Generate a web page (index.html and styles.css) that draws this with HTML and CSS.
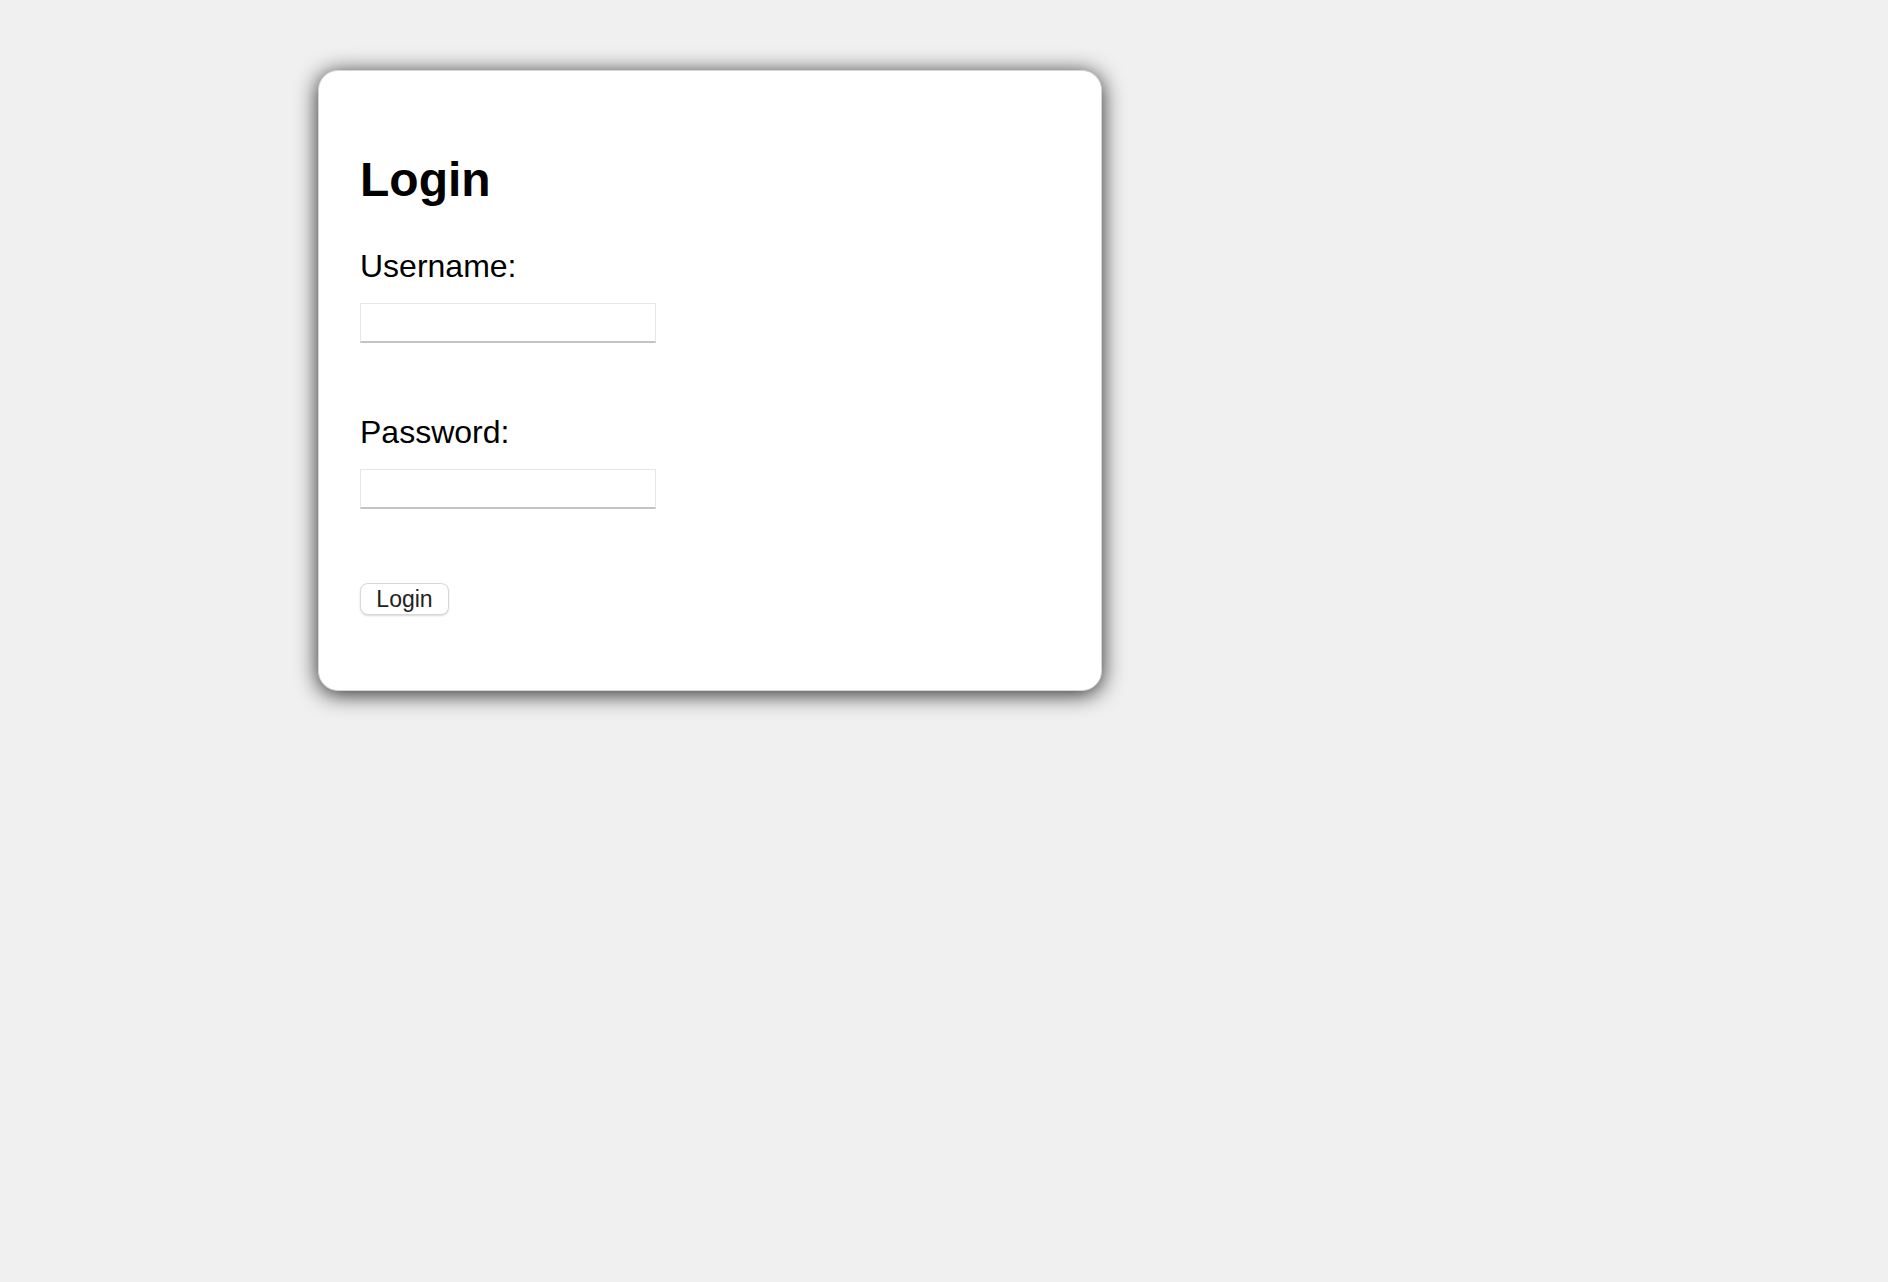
FILE: index.html
```html
<!DOCTYPE html>
<html lang="en">
<head>
<meta charset="utf-8">
<title>Login</title>
<link rel="stylesheet" href="styles.css">
</head>
<body>
<div class="card">
  <h1 class="title">Login</h1>
  <form class="form">
    <label class="label" for="username">Username:</label>
    <input class="field" id="username" type="text">
    <label class="label label-gap" for="password">Password:</label>
    <input class="field" id="password" type="password">
    <button class="btn" type="button">Login</button>
  </form>
</div>
</body>
</html>
```
FILE: styles.css
```css
html, body {
  margin: 0;
  padding: 0;
  background: #f0f0f0;
  font-family: "Liberation Sans", Arial, sans-serif;
  color: #000;
}

body {
  box-sizing: border-box;
  min-height: 100vh;
  padding: 70px 0 0 318px;
}

.card {
  box-sizing: border-box;
  width: 784px;
  height: 621px;
  background: #fff;
  border: 1px solid #d6d6d6;
  border-radius: 20px;
  box-shadow: 0 3px 22px rgba(0, 0, 0, 0.85);
  padding: 81px 41px 0 41px;
}

.title {
  margin: 0;
  font-size: 48px;
  line-height: 56px;
  font-weight: bold;
}

.form {
  display: flex;
  flex-direction: column;
  align-items: flex-start;
  margin-top: 40px;
}

.label {
  font-size: 32px;
  line-height: 37px;
}

.label-gap {
  margin-top: 71px;
}

.field {
  box-sizing: border-box;
  width: 296px;
  height: 40px;
  margin: 18px 0 0 0;
  padding: 0 6px;
  border: 1px solid #e6e6e6;
  border-bottom: 2px solid #c4c4c4;
  background: #fff;
  font-size: 22px;
  outline: none;
}

.btn {
  box-sizing: border-box;
  margin-top: 74px;
  width: 89px;
  height: 32px;
  padding: 0;
  background: #fff;
  border: 1px solid #d8d8d8;
  border-radius: 8px;
  box-shadow: 0 1px 2px rgba(0, 0, 0, 0.15);
  font-family: "Liberation Sans", Arial, sans-serif;
  font-size: 23px;
  color: #222;
}
```
